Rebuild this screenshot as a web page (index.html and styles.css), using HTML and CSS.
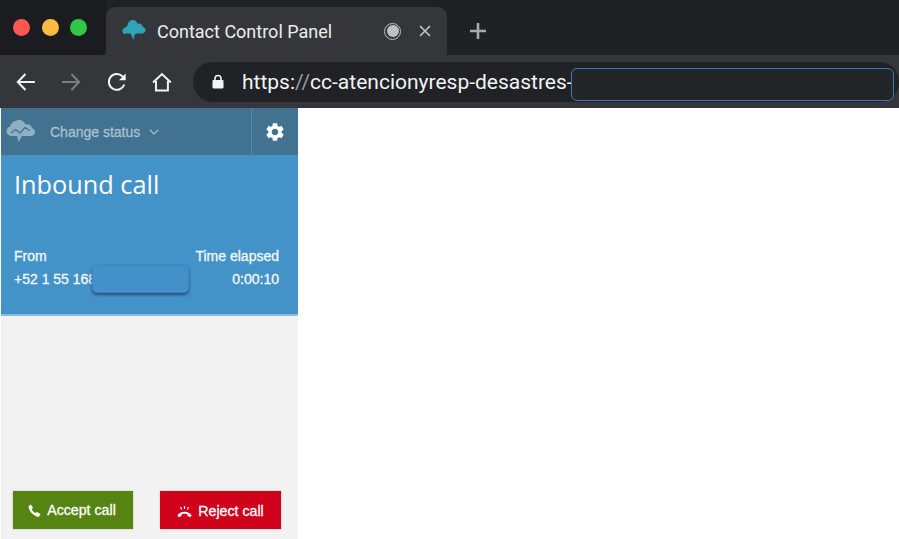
FILE: index.html
```html
<!DOCTYPE html>
<html lang="en">
  <head>
    <title>Contact Control Panel</title>
    <meta charset="utf-8">
    <link rel="stylesheet" href="styles.css">
  </head>
  <body>
    <div class="tabbar">
      <div class="lights">
        <span class="light red"></span>
        <span class="light yellow"></span>
        <span class="light green"></span>
      </div>
      <div class="tab">
        <svg class="favicon" width="24" height="24" viewBox="0 0 24 24">
          <path fill="#2fa3b8" d="M10.500 1c2.500 0 4.400 1.600 5 3.800.5-.2 1-.3 1.500-.3 2 0 3.500 1.400 3.800 3.300 1.500.4 2.700 1.700 2.700 3.300 0 2-1.600 3.500-3.600 3.500H15l-2.500 1.200-1 5.200-3-6.400H4.200C2 15.800.4 14.100.4 12c0-1.900 1.400-3.500 3.300-3.800C4 7.600 4.600 7 5.400 6.700 5.800 3.500 7.900 1 10.500 1z"/>
        </svg>
        <span class="tab-title">Contact Control Panel</span>
        <span class="record"><span></span></span>
        <svg class="tab-close" width="12" height="12" viewBox="0 0 12 12">
          <path d="M1 1l10 10M11 1L1 11" stroke="#bdc1c6" stroke-width="1.700" fill="none"/>
        </svg>
      </div>
      <svg class="newtab" width="18" height="18" viewBox="0 0 18 18">
        <path d="M9 1v16M1 9h16" stroke="#a9abae" stroke-width="2.600" fill="none"/>
      </svg>
    </div>
    <div class="toolbar">
      <svg class="navicon" width="22" height="22" viewBox="0 0 22 22">
        <path d="M20 11H3M10.500 3L2.800 11l7.700 8" stroke="#f1f3f4" stroke-width="2" fill="none"/>
      </svg>
      <svg class="navicon" width="22" height="22" viewBox="0 0 22 22">
        <path d="M2 11h17M11.500 3l7.700 8-7.700 8" stroke="#7c7e81" stroke-width="2" fill="none"/>
      </svg>
      <svg class="navicon" width="22" height="22" viewBox="0 0 22 22">
        <path d="M18.400 13.500A8 8 0 1 1 16.600 5.300L19 7.600" stroke="#f1f3f4" stroke-width="2" fill="none"/>
        <path d="M19.800 2.500v6.800H13z" fill="#f1f3f4"/>
      </svg>
      <svg class="navicon" width="22" height="22" viewBox="0 0 22 22">
        <path d="M2 11.500L11 3l9 8.500M5 10v9.500h12V10" stroke="#f1f3f4" stroke-width="2" fill="none"/>
      </svg>
      <div class="omnibox">
        <svg width="12" height="15" viewBox="0 0 12 15">
          <path d="M3 7V4.500a3 3 0 0 1 6 0V7" stroke="#f1f3f4" stroke-width="1.600" fill="none"/>
          <rect x="0.500" y="6" width="11" height="8.500" rx="1" fill="#f1f3f4"/>
        </svg>
        <span class="url">https:<span class="scheme">//</span>cc-atencionyresp-desastres-</span>
      </div>
      <div class="url-mask"></div>
    </div>
    <div class="page">
      <div class="ccp">
        <div class="ccp-header">
          <div class="status">
            <svg width="30" height="26" viewBox="0 0 30 26">
              <path fill="#8fb0c2" d="M13 1c3 0 5.500 1.800 6.500 4.500.6-.2 1.100-.3 1.700-.3 2.500 0 4.500 1.700 5 4 1.500.5 2.800 2 2.800 3.800 0 2.400-2 4-4.300 4H16l-3.500 6-1.500-6H6c-3 0-5.500-2-5.500-4.800 0-2.200 1.400-4 3.500-4.500C4.500 5 8 1 13 1z"/>
              <path d="M5 14l4.500-3.500 4.500 3.500 5-5.500 5 3" stroke="#41728f" stroke-width="1.300" fill="none"/>
            </svg>
            <span class="status-label">Change status</span>
            <svg width="10" height="6" viewBox="0 0 10 6">
              <path d="M.8.8L5 5l4.200-4.200" stroke="#9db9c9" stroke-width="1.300" fill="none"/>
            </svg>
          </div>
          <div class="settings">
            <svg width="22" height="22" viewBox="0 0 24 24">
              <path fill="#fff" d="M19.140 12.940c.04-.3.06-.61.06-.94 0-.32-.02-.64-.07-.94l2.030-1.580c.18-.14.23-.41.12-.61l-1.920-3.320c-.12-.22-.37-.29-.59-.22l-2.390.96c-.5-.38-1.030-.7-1.620-.94l-.36-2.540c-.04-.24-.24-.41-.48-.41h-3.840c-.24 0-.43.17-.47.41l-.36 2.540c-.59.24-1.130.57-1.620.94l-2.390-.96c-.22-.08-.47 0-.59.22L2.740 8.870c-.12.21-.08.47.12.61l2.030 1.580c-.05.3-.09.63-.09.94s.02.64.07.94l-2.030 1.580c-.18.14-.23.41-.12.61l1.920 3.320c.12.22.37.29.59.22l2.390-.96c.5.38 1.030.7 1.620.94l.36 2.540c.05.24.24.41.48.41h3.840c.24 0 .44-.17.47-.41l.36-2.540c.59-.24 1.130-.56 1.620-.94l2.390.96c.22.08.47 0 .59-.22l1.920-3.320c.12-.22.07-.47-.12-.61l-2.010-1.580zM12 15.600c-1.980 0-3.600-1.620-3.600-3.600s1.620-3.600 3.600-3.600 3.600 1.620 3.600 3.600-1.620 3.600-3.600 3.600z"/>
            </svg>
          </div>
        </div>
        <div class="call">
          <h1 class="call-title">Inbound call</h1>
          <div class="call-info">
            <div>
              <div>From</div>
              <div>+52 1 55 168</div>
            </div>
            <div class="right">
              <div>Time elapsed</div>
              <div>0:00:10</div>
            </div>
          </div>
          <div class="phone-mask"></div>
        </div>
        <div class="actions">
          <button type="button" class="accept">
            <svg width="13" height="13" viewBox="0 0 13 13">
              <path fill="#fff" d="M2.800.5L5 3.600 3.800 5.200c.7 1.600 2 2.900 3.800 3.900L9.200 8l3.300 2.300-1.400 2.200c-.4.400-1.300.4-2.500 0C5 11 2 8 .8 4.300.4 3 .5 2.200.9 1.700z"/>
            </svg>
            Accept call
          </button>
          <button type="button" class="reject">
            <svg width="15" height="13" viewBox="0 0 15 13">
              <path fill="#fff" d="M.3 10.500C2 8 4.500 6.800 7.500 6.800s5.500 1.200 7.200 3.700l-1.600 1.800-2.700-1.500V9.200c-1.800-.6-3.900-.6-5.800 0v1.600l-2.700 1.500z"/>
              <path d="M7.500 1v3M3.500 2l1.200 2.600M11.500 2l-1.200 2.600" stroke="#fff" stroke-width="1.200" fill="none"/>
            </svg>
            Reject call
          </button>
        </div>
      </div>
    </div>
  </body>
</html>
```

FILE: styles.css
```css
html, body {
  margin: 0;
  height: 100%;
  overflow: hidden;
}
body {
  background-color: #fff;
  font-family: "Liberation Sans", Arial, sans-serif;
  display: flex;
  flex-direction: column;
}

/* browser window */
.tabbar {
  height: 55px;
  background-color: #202124;
  display: flex;
  align-items: flex-end;
  flex-shrink: 0;
}
.lights {
  width: 106px;
  height: 100%;
  padding: 19px 0 0 13px;
  box-sizing: border-box;
  display: flex;
  gap: 11.500px;
  background-color: #1b1c1f;
  border-bottom-right-radius: 8px;
}
.light {
  width: 17px;
  height: 17px;
  border-radius: 50%;
}
.red { background-color: #fc5753; }
.yellow { background-color: #fdbc40; }
.green { background-color: #33c748; }
.tab {
  width: 341px;
  height: 48px;
  background-color: #35363a;
  border-radius: 9px 9px 0 0;
  display: flex;
  align-items: center;
  padding: 0 16px;
  box-sizing: border-box;
}
.favicon {
  flex-shrink: 0;
}
.tab-title {
  color: #eceded;
  font-family: Roboto, sans-serif;
  font-size: 18px;
  margin-left: 11px;
  flex: 1;
  white-space: nowrap;
}
.record {
  width: 17px;
  height: 17px;
  border: 1.500px solid #bdc1c6;
  border-radius: 50%;
  box-sizing: border-box;
  display: flex;
  align-items: center;
  justify-content: center;
  margin-right: 18px;
}
.record span {
  width: 12px;
  height: 12px;
  border-radius: 50%;
  background-color: #bdc1c6;
}
.newtab {
  margin: 0 0 15px 22px;
}
.toolbar {
  height: 53px;
  background-color: #35363a;
  display: flex;
  align-items: center;
  padding-left: 15px;
  gap: 23.500px;
  position: relative;
  flex-shrink: 0;
}
.omnibox {
  width: 706px;
  height: 40px;
  background-color: #202225;
  border-radius: 20px;
  margin-left: -3.500px;
  padding-left: 19px;
  box-sizing: border-box;
  display: flex;
  align-items: center;
  gap: 18px;
  flex-shrink: 0;
}
.url {
  color: #f1f3f4;
  font-family: Roboto, sans-serif;
  font-size: 21px;
  white-space: nowrap;
}
.scheme {
  color: #9a9ca0;
}
.url-mask {
  position: absolute;
  left: 571px;
  top: 13px;
  width: 323px;
  height: 33px;
  box-sizing: border-box;
  background-color: #232629;
  border: 1px solid #3f76b3;
  border-radius: 6px;
}

/* contact panel */
.page {
  flex: 1;
  min-height: 0;
  display: flex;
}
.ccp {
  width: 297px;
  margin-left: 1px;
  background-color: #f2f2f2;
  display: flex;
  flex-direction: column;
}
.ccp-header {
  height: 47px;
  background-color: #41728f;
  display: flex;
  flex-shrink: 0;
}
.status {
  flex: 1;
  display: flex;
  align-items: center;
  padding-left: 5px;
}
.status-label {
  color: #a6c0cf;
  font-size: 14px;
  margin: 0 9px 0 14px;
  -webkit-text-stroke: 0.3px #a6c0cf;
}
.settings {
  width: 47px;
  padding-top: 1px;
  box-sizing: border-box;
  border-left: 1px solid #5b88a3;
  display: flex;
  align-items: center;
  justify-content: center;
}
.call {
  height: 161px;
  padding: 12px 19px 0 13px;
  box-sizing: border-box;
  background-color: #4393c8;
  border-bottom: 2px solid #8fbbdc;
  color: #fff;
  position: relative;
  flex-shrink: 0;
}
.call-title {
  margin: 0;
  font-family: "Open Sans", sans-serif;
  font-weight: 400;
  font-size: 25.300px;
  line-height: 34px;
}
.call-info {
  display: flex;
  justify-content: space-between;
  margin-top: 44px;
  font-size: 14px;
  line-height: 23px;
  color: #f4f8fb;
  -webkit-text-stroke: 0.3px #f4f8fb;
}
.right {
  text-align: right;
}
.phone-mask {
  position: absolute;
  left: 91px;
  top: 110px;
  width: 97px;
  height: 28px;
  box-sizing: border-box;
  border: 1px solid #3f86bf;
  border-radius: 5px;
  background-color: #4391c8;
  box-shadow: 0 2px 3px rgba(40, 70, 120, 0.9);
}
.actions {
  margin-top: auto;
  padding: 0 17px 10px 12px;
  display: flex;
  justify-content: space-between;
  align-items: flex-end;
}
.actions button {
  height: 38px;
  border: 0;
  color: #fff;
  font-family: "Liberation Sans", Arial, sans-serif;
  font-size: 14.200px;
  display: flex;
  align-items: center;
  justify-content: center;
  gap: 6px;
  -webkit-text-stroke: 0.3px #fff;
  box-shadow: 0 0 2px rgba(0, 0, 0, 0.2);
}
.accept {
  width: 120px;
  padding: 0 2px 0 0;
  background-color: #558412;
}
.reject {
  width: 121px;
  padding: 2px 0 0 0;
  background-color: #d0021b;
}
```
